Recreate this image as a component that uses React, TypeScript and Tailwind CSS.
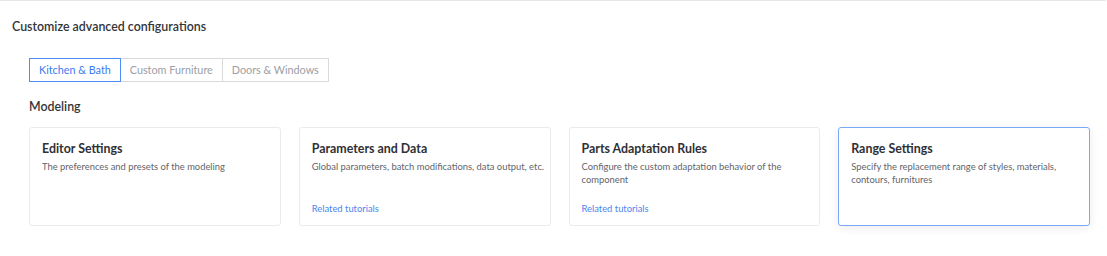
import { useState } from 'react'

const tabs = ['Kitchen & Bath', 'Custom Furniture', 'Doors & Windows']

const cards = [
  { title: 'Editor Settings', desc: 'The preferences and presets of the modeling', link: false },
  { title: 'Parameters and Data', desc: 'Global parameters, batch modifications, data output, etc.', link: true },
  { title: 'Parts Adaptation Rules', desc: 'Configure the custom adaptation behavior of the component', link: true },
  { title: 'Range Settings', desc: 'Specify the replacement range of styles, materials, contours, furnitures', link: false },
]

export default function App() {
  const [active, setActive] = useState(0)
  const [hovered, setHovered] = useState(3)

  return (
    <div className="w-[1107px] h-[256px] bg-white font-['Lato',sans-serif] text-[#33353a]">
      <div className="w-[1106px] border-t border-[#e6e6e6]" />
      <div className="pl-[12px] pt-[17px] text-[12.4px] font-semibold leading-[18px]">
        Customize advanced configurations
      </div>

      <div className="pl-[29px] pr-[17px]">
        <div className="flex mt-[22px] h-[24px]">
          {tabs.map((t, i) => (
            <button
              key={t}
              onClick={() => setActive(i)}
              className={
                i === active
                  ? 'px-[9px] text-[10.8px] leading-[22px] border border-[#4d8cf5] text-[#3b7cf0] bg-white'
                  : 'px-[9px] text-[10.8px] leading-[22px] border border-l-0 border-[#d9d9d9] text-[#9b9ea4] bg-white'
              }
            >
              {t}
            </button>
          ))}
        </div>

        <div className="mt-[16px] text-[12.4px] font-semibold leading-[18px]">Modeling</div>

        <div className="grid grid-cols-4 gap-[18px] mt-[11px]">
          {cards.map((c, i) => (
            <div
              key={c.title}
              onMouseEnter={() => setHovered(i)}
              className={
                i === hovered
                  ? 'h-[99px] rounded-[3px] border border-[#7aa9f7] bg-white pl-[12px] pr-[4px] pt-[12px] pb-[10px] flex flex-col shadow-[0_2px_10px_rgba(0,0,0,0.08)]'
                  : 'h-[99px] rounded-[3px] border border-[#ebebeb] bg-white pl-[12px] pr-[4px] pt-[12px] pb-[10px] flex flex-col'
              }
            >
              <div className="text-[12.4px] font-bold leading-[17px] text-[#2f3035]">{c.title}</div>
              <div className="mt-[3px] text-[9.4px] leading-[13px] text-[#62656c]">{c.desc}</div>
              {c.link && (
                <div className="mt-auto text-[9.4px] leading-[13px] text-[#4a86f0]">Related tutorials</div>
              )}
            </div>
          ))}
        </div>
      </div>
    </div>
  )
}
